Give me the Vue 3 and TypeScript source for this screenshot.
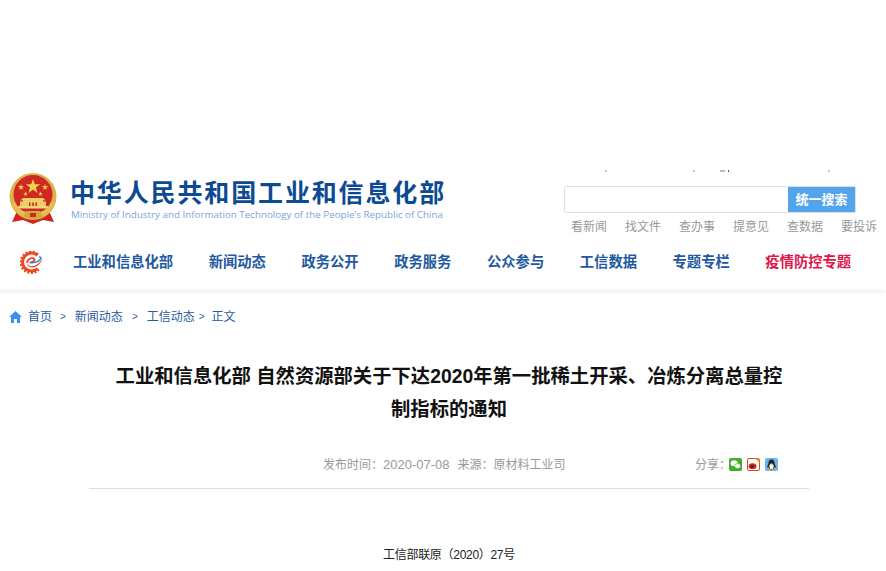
<template>
  <div class="page">
    <header class="head">
      <div class="brand">
        <svg class="emblem" width="48" height="52" viewBox="0 0 48 52">
          <path d="M8 38 L3 49 L14 47 L24 51 L34 47 L45 49 L40 38 Z" fill="#d3231f" />
          <circle cx="24" cy="23.500" r="23.500" fill="#dcb44c" />
          <circle cx="24" cy="21.500" r="19.500" fill="#cf2a22" />
          <path d="M24 6l1.800 5.300h5.500l-4.400 3.300 1.700 5.300-4.600-3.300-4.600 3.300 1.700-5.300-4.400-3.300h5.500z" fill="#f4d24f" />
          <path d="M12 11l.8 2.300h2.400l-2 1.400.8 2.300-2-1.400-2 1.400.8-2.300-2-1.400h2.400zM36 11l.8 2.300h2.400l-2 1.400.8 2.300-2-1.400-2 1.400.8-2.300-2-1.400h2.400zM16.500 18.500l.6 1.700h1.800l-1.500 1 .6 1.800-1.500-1.100-1.500 1.100.6-1.800-1.500-1h1.800zM31.500 18.500l.6 1.700h1.800l-1.500 1 .6 1.800-1.500-1.100-1.500 1.100.6-1.800-1.500-1h1.800z" fill="#f4d24f" />
          <path d="M14 25h20l2.500 2.200H34v1.300h3V33H11v-4.500h3v-1.300h-2.500z" fill="#edcf6a" />
          <path d="M20 29.500h1.500V33H20zM23.200 29.500h1.600V33h-1.600zM26.500 29.500H28V33h-1.500z" fill="#b9301f" />
          <path d="M9 33h30v2.500H9z" fill="#f0d676" />
          <path d="M3 30c2 9 10 15 21 15s19-6 21-15l-3-1c-3 7-9 11-18 11S9 36 6 29z" fill="#e3be55" />
          <path d="M17 38h14l3 6-10 3-10-3z" fill="#d3a93f" />
          <path d="M21 40h6v4h-6z" fill="#cf2a22" />
        </svg>
        <div class="brand-text">
          <div class="brand-cn">中华人民共和国工业和信息化部</div>
          <div class="brand-en">Ministry of Industry and Information Technology of the People’s Republic of China</div>
        </div>
      </div>
      <div class="tools">
        <div class="specks">
          <i class="sp sp-a"></i>
          <i class="sp sp-b"></i>
          <i class="sp sp-c"></i>
          <i class="sp sp-d"></i>
          <i class="sp sp-e"></i>
        </div>
        <div class="search">
          <input class="search-input" type="text" aria-label="搜索" />
          <button type="button" class="search-btn">统一搜索</button>
        </div>
        <div class="quick">
          <a v-for="q in quickLinks" :key="q">{{ q }}</a>
        </div>
      </div>
    </header>

    <nav class="nav">
      <svg class="nav-logo" width="24" height="24" viewBox="0 0 24 24">
        <path d="M17.500 5.300A9 9 0 1 0 17.800 18.500" fill="none" stroke="#ea4a22" stroke-width="3" />
        <path d="M17.800 4.200A10.500 10.500 0 1 0 18.800 19.600" fill="none" stroke="#ea4a22" stroke-width="2.400" stroke-dasharray="2 1.600" />
        <path d="M7 13.500c1.500 3.200 6.500 3.500 10 1 2.200-1.500 4-3.400 5.500-6-1 3.600-3.500 7-7 8.300-4 1.500-8.500 0-8.500-3.300z" fill="#e8401e" />
        <path d="M7 12.800c.4-4 5.500-6 7.500-3.800 1 1.200-1.500 3.300-5 3.600" fill="none" stroke="#e8401e" stroke-width="1.700" />
        <path d="M10.500 12.700c4 .2 8-1.200 10-3.500 1-1.200.3-2.400-1.500-2.200" fill="none" stroke="#2c8fc8" stroke-width="1.600" />
      </svg>
      <a v-for="n in navItems" :key="n.label" class="nav-item" :class="{ hot: n.hot }">{{ n.label }}</a>
    </nav>

    <div class="crumbs">
      <svg class="home" width="13" height="12" viewBox="0 0 13 12">
        <path d="M6.500 0L13 6h-2v6H8V8H5v4H2V6H0z" fill="#3d8ef0" />
      </svg>
      <a class="c1">首页</a>
      <span class="sep s1">&gt;</span>
      <a>新闻动态</a>
      <span class="sep s2">&gt;</span>
      <a>工信动态</a>
      <span class="sep s3">&gt;</span>
      <a>正文</a>
    </div>

    <main class="article">
      <h1 class="title">工业和信息化部 自然资源部关于下达2020年第一批稀土开采、冶炼分离总量控制指标的通知</h1>
      <div class="meta">
        <div class="meta-main">
          <span>发布时间：<span class="num">2020-07-08</span></span>
          <span>来源：原材料工业司</span>
        </div>
        <div class="share">
          <span class="share-label">分享：</span>
          <svg width="13" height="13" viewBox="0 0 13 13">
            <rect width="13" height="13" rx="2" fill="#3fae29" />
            <ellipse cx="5.200" cy="5.200" rx="3.600" ry="3" fill="#fff" />
            <ellipse cx="8.600" cy="8" rx="3" ry="2.500" fill="#fff" stroke="#3fae29" stroke-width=".6" />
          </svg>
          <svg width="13" height="13" viewBox="0 0 13 13">
            <rect x=".5" y=".5" width="12" height="12" rx="1.500" fill="#fff" stroke="#e2452b" />
            <path d="M8 .5h4.500V5z" fill="#f39a2d" />
            <ellipse cx="5.500" cy="8.300" rx="4" ry="3" fill="#d82a20" />
            <circle cx="5.200" cy="8.500" r="1.500" fill="#222" />
          </svg>
          <svg width="13" height="13" viewBox="0 0 13 13">
            <rect width="13" height="13" rx="2" fill="#6cb4ec" />
            <path d="M6.500 1.500c2 0 3 1.500 3 3.500 0 1 .8 2 1.200 3.500.3 1.300-.5 1.300-1.200.4-.3 1.500-1.500 2.600-3 2.600s-2.700-1.100-3-2.600c-.7.900-1.500.9-1.200-.4C2.700 7 3.500 6 3.500 5c0-2 1-3.500 3-3.500z" fill="#222" />
            <ellipse cx="6.500" cy="8.300" rx="2.100" ry="2.800" fill="#fff" />
            <path d="M4.500 6.300h4l-2 1.200z" fill="#f2a51f" />
            <path d="M3.500 11.200h2.500v1H3zM7 11.200h2.500l.5 1H7z" fill="#f2a51f" />
          </svg>
        </div>
      </div>
      <p class="doc-no">工信部联原（2020）27号</p>
    </main>
  </div>
</template>

<script setup lang="ts">
const quickLinks: string[] = ["看新闻", "找文件", "查办事", "提意见", "查数据", "要投诉"];

const navItems: { label: string; hot?: boolean }[] = [
  { label: "工业和信息化部" },
  { label: "新闻动态" },
  { label: "政务公开" },
  { label: "政务服务" },
  { label: "公众参与" },
  { label: "工信数据" },
  { label: "专题专栏" },
  { label: "疫情防控专题", hot: true },
];
</script>

<style>
html,
body {
  margin: 0;
  background: #fff;
}
</style>

<style scoped>
.page {
  width: 886px;
  height: 571px;
  overflow: hidden;
  font-family: "Liberation Sans", Arial, "Noto Sans CJK SC", sans-serif;
  color: #333;
}
a {
  text-decoration: none;
  cursor: pointer;
}
.head {
  display: flex;
  justify-content: space-between;
  padding: 170px 9px 0 9px;
  height: 63px;
}
.brand {
  display: flex;
  gap: 13px;
  padding-top: 3px;
}
.emblem {
  flex: none;
}
.brand-text {
  padding-top: 5px;
}
.brand-cn {
  font-size: 25px;
  line-height: 30px;
  font-weight: 700;
  letter-spacing: 1.86px;
  color: #0c4a94;
  white-space: nowrap;
}
.brand-en {
  font-family: "Open Sans", sans-serif;
  font-size: 9.800px;
  line-height: 13px;
  margin: 0 0 0 1px;
  color: #7ba4da;
  white-space: nowrap;
}
.tools {
  width: 313px;
}
.specks {
  display: flex;
  height: 2px;
  margin-bottom: 14px;
}
.sp {
  display: block;
  width: 2px;
  height: 2px;
  background: #cfc4bc;
}
.sp-a {
  margin-left: 41px;
}
.sp-b {
  margin-left: 86px;
}
.sp-c {
  margin-left: 25px;
  width: 5px;
  background: #b9b9c4;
}
.sp-d {
  margin-left: 3px;
  width: 1px;
  background: #8a2a90;
}
.sp-e {
  margin-left: 99px;
}
.search {
  display: flex;
  width: 292px;
  height: 27px;
  border: 1px solid #d4e3ef;
  border-radius: 2px;
  box-sizing: border-box;
}
.search-input {
  flex: 1;
  min-width: 0;
  border: 0;
  padding: 0;
  outline: 0;
  background: #fff;
}
.search-btn {
  width: 67px;
  border: 0;
  padding: 0;
  background: #54a4ec;
  color: #fff;
  font: 700 13px/25px "Liberation Sans", "Noto Sans CJK SC", sans-serif;
}
.quick {
  display: flex;
  justify-content: space-between;
  width: 306px;
  margin: 6px 0 0 7px;
  font-size: 12px;
  line-height: 16px;
  color: #999;
}
.nav {
  display: flex;
  align-items: center;
  gap: 35.600px;
  height: 57px;
  padding-left: 20px;
  box-shadow: 0 2px 4px rgba(120, 150, 190, 0.16);
  position: relative;
}
.nav-logo {
  margin-right: -6.600px;
}
.nav-item {
  font-size: 14.300px;
  font-weight: 700;
  line-height: 18px;
  color: #1f5a9e;
  white-space: nowrap;
}
.nav-item.hot {
  color: #e0164a;
}
.crumbs {
  display: flex;
  align-items: center;
  height: 16px;
  margin-top: 19px;
  padding-left: 9px;
  font-size: 12px;
  line-height: 16px;
  color: #2a5c9c;
}
.c1 {
  margin-left: 6px;
}
.sep {
  font-size: 10px;
  color: #3a5f95;
}
.s1 {
  margin: 0 9px 0 8px;
}
.s2 {
  margin: 0 9px 0 9px;
}
.s3 {
  margin: 0 7px 0 4px;
}
.article {
  width: 720px;
  margin-left: 89px;
}
.title {
  width: 680px;
  margin: 35px auto 0;
  font-size: 19.330px;
  line-height: 33px;
  font-weight: 700;
  color: #111;
  text-align: center;
}
.meta {
  display: flex;
  justify-content: space-between;
  height: 31px;
  margin-top: 31px;
  padding: 0 31px 0 234px;
  border-bottom: 1px solid #ddd;
  font-size: 12px;
  line-height: 16px;
  color: #999;
}
.meta-main {
  display: flex;
  gap: 8px;
}
.num {
  font-size: 13px;
}
.share {
  display: flex;
  align-items: flex-start;
  gap: 5px;
}
.share svg {
  margin-top: 1px;
}
.share-label {
  margin-right: 1px;
  width: 28px;
  white-space: nowrap;
}
.doc-no {
  margin: 58px 0 0;
  font-size: 12px;
  line-height: 16px;
  letter-spacing: -0.3px;
  text-align: center;
  color: #222;
}
</style>
